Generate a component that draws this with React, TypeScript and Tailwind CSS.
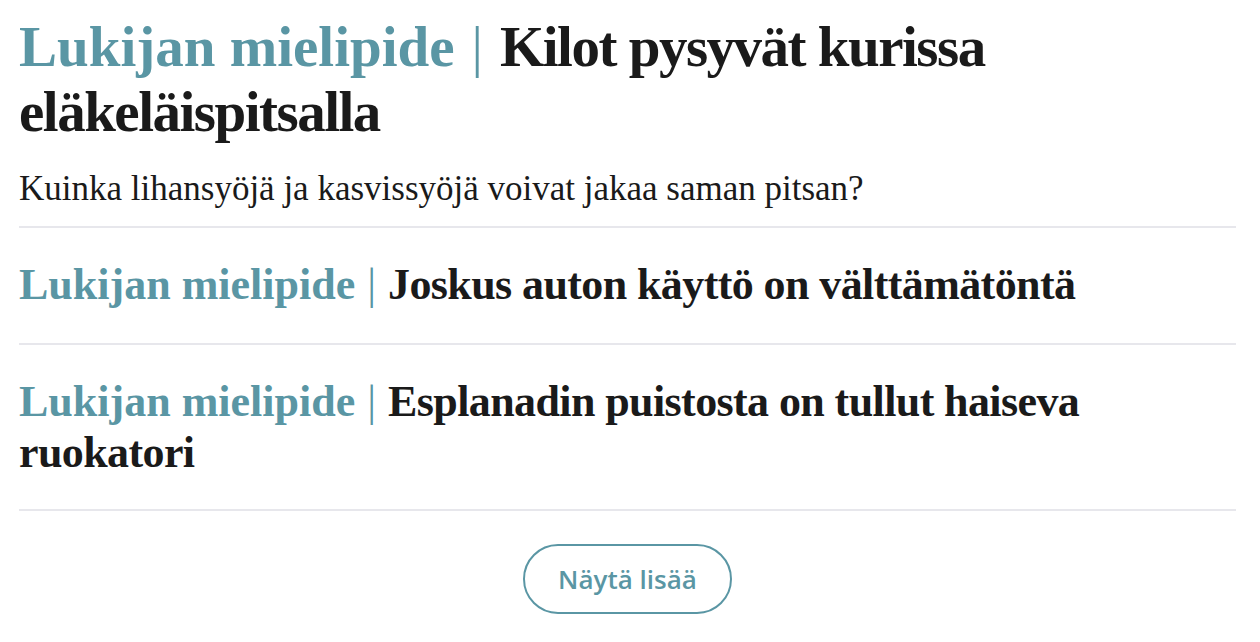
import React from 'react';

const serif = { fontFamily: '"Liberation Serif", "DejaVu Serif", serif' };

interface Item { title: string; lead?: string; big?: boolean; pb: string; }

const items: Item[] = [
  { title: 'Kilot pysyvät kurissa eläkeläispitsalla', lead: 'Kuinka lihansyöjä ja kasvissyöjä voivat jakaa saman pitsan?', big: true, pb: 'pb-[17px]' },
  { title: 'Joskus auton käyttö on välttämätöntä', pb: 'pb-[33px]' },
  { title: 'Esplanadin puistosta on tullut haiseva ruokatori', pb: 'pb-[31px]' },
];

function Row({ item }: { item: Item }) {
  return (
    <div className={`border-b-2 border-[#e7e7ec] ${item.pb} ${item.big ? 'pt-[14px]' : 'pt-[31px]'}`}>
      <h2
        style={serif}
        className={`font-bold text-[#1a1a1a] ${item.big ? 'text-[57px] leading-[65px]' : 'text-[44px] leading-[51px]'}`}
      >
        <span className="text-[#5a96a4]">Lukijan mielipide</span>
        <span className={`text-[#5a96a4] font-normal ${item.big ? 'mx-[17px]' : 'mx-[12px]'}`}>|</span>
        <span className={item.big ? 'tracking-[-1.5px]' : 'tracking-[-0.6px]'}>{item.title}</span>
      </h2>
      {item.lead && (
        <p style={serif} className="mt-[25px] text-[35px] leading-[40px] text-[#1a1a1a]">
          {item.lead}
        </p>
      )}
    </div>
  );
}

export default function App() {
  return (
    <div className="bg-white w-[1260px] h-[642px] pl-[19px] pr-[24px]">
      {items.map((it, i) => (
        <Row key={i} item={it} />
      ))}
      <div className="flex justify-center pt-[33px]">
        <button
          type="button"
          className="h-[70px] w-[209px] rounded-full border-2 border-[#5a96a4] text-[#5a96a4] text-[26px] font-semibold"
          style={{ fontFamily: '"Open Sans", "Noto Sans", sans-serif' }}
        >
          Näytä lisää
        </button>
      </div>
    </div>
  );
}
